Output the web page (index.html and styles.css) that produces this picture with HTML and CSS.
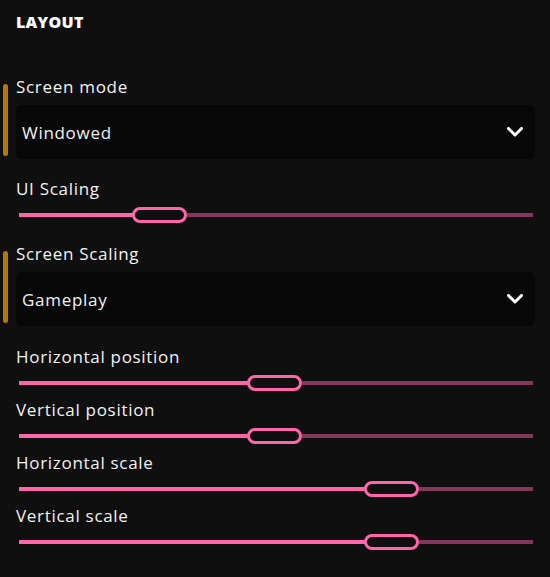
FILE: index.html
```html
<!DOCTYPE html>
<html>
<head>
<meta charset="utf-8">
<link rel="stylesheet" href="styles.css">
</head>
<body>
<section class="section">
  <h2 class="title">LAYOUT</h2>

  <div class="setting setting-drop changed first">
    <span class="marker"></span>
    <div class="label">Screen mode</div>
    <div class="dropdown">
      <span class="dd-text">Windowed</span>
      <svg class="chev" width="16" height="10" viewBox="0 0 16 10"><path d="M1.5 1.5 L8 8 L14.5 1.5" fill="none" stroke="#fff" stroke-width="3" stroke-linecap="round" stroke-linejoin="round"/></svg>
    </div>
  </div>

  <div class="setting setting-slider after-drop">
    <div class="label">UI Scaling</div>
    <div class="slider">
      <span class="fill" style="width:114px"></span>
      <span class="thumb"></span>
      <span class="rest"></span>
    </div>
  </div>

  <div class="setting setting-drop changed">
    <span class="marker"></span>
    <div class="label">Screen Scaling</div>
    <div class="dropdown">
      <span class="dd-text">Gameplay</span>
      <svg class="chev" width="16" height="10" viewBox="0 0 16 10"><path d="M1.5 1.5 L8 8 L14.5 1.5" fill="none" stroke="#fff" stroke-width="3" stroke-linecap="round" stroke-linejoin="round"/></svg>
    </div>
  </div>

  <div class="setting setting-slider after-drop second">
    <div class="label">Horizontal position</div>
    <div class="slider">
      <span class="fill" style="width:229px"></span>
      <span class="thumb"></span>
      <span class="rest"></span>
    </div>
  </div>

  <div class="setting setting-slider">
    <div class="label">Vertical position</div>
    <div class="slider">
      <span class="fill" style="width:229px"></span>
      <span class="thumb"></span>
      <span class="rest"></span>
    </div>
  </div>

  <div class="setting setting-slider">
    <div class="label">Horizontal scale</div>
    <div class="slider">
      <span class="fill" style="width:346px"></span>
      <span class="thumb"></span>
      <span class="rest"></span>
    </div>
  </div>

  <div class="setting setting-slider">
    <div class="label">Vertical scale</div>
    <div class="slider">
      <span class="fill" style="width:346px"></span>
      <span class="thumb"></span>
      <span class="rest"></span>
    </div>
  </div>
</section>
</body>
</html>
```

FILE: styles.css
```css
html, body {
  margin: 0;
  padding: 0;
  background: #0f0f0f;
  color: #fff;
  font-family: "Open Sans", "Noto Sans", sans-serif;
}

.section {
  padding: 12px 15px 0 16px;
}

.title {
  margin: 0;
  font-size: 16px;
  font-weight: 800;
  line-height: 20px;
  letter-spacing: 0.3px;
}

.setting {
  position: relative;
}

.label {
  font-size: 17px;
  line-height: 20px;
  letter-spacing: 0.7px;
  color: #f2f2f2;
}

.setting-drop {
  margin-top: 21px;
}

.setting-drop.first {
  margin-top: 45px;
}

.setting-drop .dropdown {
  margin-top: 8px;
}

.marker {
  position: absolute;
  left: -13px;
  top: 7px;
  width: 5px;
  height: 72px;
  border-radius: 3px;
  background: #b87700;
}

.dropdown {
  height: 54px;
  background: #070707;
  border-radius: 6px;
  display: flex;
  align-items: center;
  justify-content: space-between;
  padding: 0 12px 0 6px;
}

.dd-text {
  font-size: 17px;
  letter-spacing: 0.7px;
  color: #f2f2f2;
}

.chev {
  display: block;
}

.setting-slider {
  margin-top: 9px;
}

.setting-slider.after-drop {
  margin-top: 20px;
}

.setting-slider.after-drop.second {
  margin-top: 21px;
}

.setting-slider .label {
  margin-bottom: 8px;
}

.slider {
  display: flex;
  align-items: center;
  height: 16px;
  padding: 0 2px 0 3px;
}

.fill {
  height: 4px;
  background: #ff66aa;
}

.thumb {
  box-sizing: border-box;
  width: 55px;
  height: 16px;
  border: 3px solid #ff66aa;
  border-radius: 8px;
  background: #0f0f0f;
  margin-left: -1px;
}

.rest {
  flex: 1;
  height: 4px;
  background: #82385b;
}
```
